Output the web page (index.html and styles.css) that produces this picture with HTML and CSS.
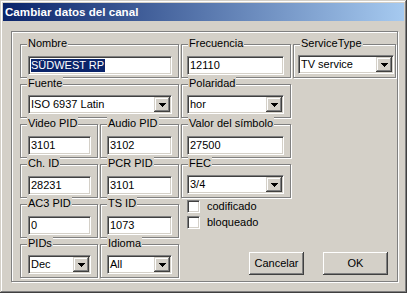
FILE: index.html
```html
<!DOCTYPE html>
<html>
<head>
<meta charset="utf-8">
<link rel="stylesheet" href="styles.css">
</head>
<body>
<div class="window">
  <div class="titlebar">Cambiar datos del canal</div>
  <div class="panel">
    <div class="grid">
      <div class="group wide r1 pl8"><span class="legend">Nombre</span>
        <div class="edit"><span class="sel">SÜDWEST RP</span></div></div>
      <div class="group c3 r1 pl5"><span class="legend">Frecuencia</span>
        <div class="edit">12110</div></div>
      <div class="group c4 r1 pl4"><span class="legend">ServiceType</span>
        <div class="combo"><span class="val">TV service</span><span class="drop"><svg width="7" height="4"><path d="M0 0h7v1H0zM1 1h5v1H1zM2 2h3v1H2zM3 3h1v1H3z"/></svg></span></div></div>

      <div class="group wide r2 pl8"><span class="legend">Fuente</span>
        <div class="combo"><span class="val">ISO 6937 Latin</span><span class="drop"><svg width="7" height="4"><path d="M0 0h7v1H0zM1 1h5v1H1zM2 2h3v1H2zM3 3h1v1H3z"/></svg></span></div></div>
      <div class="group c3 r2 pl5"><span class="legend">Polaridad</span>
        <div class="combo"><span class="val">hor</span><span class="drop"><svg width="7" height="4"><path d="M0 0h7v1H0zM1 1h5v1H1zM2 2h3v1H2zM3 3h1v1H3z"/></svg></span></div></div>

      <div class="group c1 r3 pl8"><span class="legend">Video PID</span>
        <div class="edit">3101</div></div>
      <div class="group c2 r3 pl6"><span class="legend">Audio PID</span>
        <div class="edit">3102</div></div>
      <div class="group c3 r3 pl5"><span class="legend">Valor del símbolo</span>
        <div class="edit">27500</div></div>

      <div class="group c1 r4 pl8"><span class="legend">Ch. ID</span>
        <div class="edit">28231</div></div>
      <div class="group c2 r4 pl6"><span class="legend">PCR PID</span>
        <div class="edit">3101</div></div>
      <div class="group c3 r4 pl5"><span class="legend">FEC</span>
        <div class="combo"><span class="val">3/4</span><span class="drop"><svg width="7" height="4"><path d="M0 0h7v1H0zM1 1h5v1H1zM2 2h3v1H2zM3 3h1v1H3z"/></svg></span></div></div>

      <div class="group c1 r5 pl8"><span class="legend">AC3 PID</span>
        <div class="edit">0</div></div>
      <div class="group c2 r5 pl6"><span class="legend">TS ID</span>
        <div class="edit">1073</div></div>
      <div class="checks">
        <label class="check"><span class="cbox"></span>codificado</label>
        <label class="check"><span class="cbox"></span>bloqueado</label>
      </div>

      <div class="group c1 r6 pl8"><span class="legend">PIDs</span>
        <div class="combo"><span class="val">Dec</span><span class="drop"><svg width="7" height="4"><path d="M0 0h7v1H0zM1 1h5v1H1zM2 2h3v1H2zM3 3h1v1H3z"/></svg></span></div></div>
      <div class="group c2 r6 pl6"><span class="legend">Idioma</span>
        <div class="combo"><span class="val">All</span><span class="drop"><svg width="7" height="4"><path d="M0 0h7v1H0zM1 1h5v1H1zM2 2h3v1H2zM3 3h1v1H3z"/></svg></span></div></div>
      <div class="buttons">
        <div class="btn btn-cancel">Cancelar</div>
        <div class="btn btn-ok">OK</div>
      </div>
    </div>
  </div>
</div>
</body>
</html>
```

FILE: styles.css
```css
html, body {
  margin: 0;
  padding: 0;
  background: #d4d0c8;
}
body {
  font-family: "Liberation Sans", Arial, sans-serif;
  font-size: 11px;
  color: #000;
}
.window {
  width: 407px;
  height: 293px;
  box-sizing: border-box;
  padding: 3px;
  background: #d4d0c8;
  box-shadow: inset -1px -1px #404040, inset 1px 1px #d4d0c8, inset -2px -2px #808080, inset 2px 2px #ffffff;
}
.titlebar {
  height: 18px;
  line-height: 18px;
  padding-left: 2px;
  background: linear-gradient(to right, #0a246a, #a6caf0);
  color: #fff;
  font-weight: bold;
  font-size: 11.6px;
  white-space: nowrap;
}
.panel {
  margin: 10px 0 0 8px;
  width: 387px;
  height: 251px;
  box-sizing: border-box;
  border: 1px solid #808080;
  box-shadow: inset 1px 1px #fff, 1px 1px #fff;
  padding: 12px 0 0 8px;
}
.grid {
  display: grid;
  grid-template-columns: 78px 79px 110px 103px;
  grid-template-rows: repeat(6, 34px);
  column-gap: 2px;
  row-gap: 6px;
}
.r1 { grid-row: 1; }
.r2 { grid-row: 2; }
.r3 { grid-row: 3; }
.r4 { grid-row: 4; }
.r5 { grid-row: 5; }
.r6 { grid-row: 6; }
.c1 { grid-column: 1; }
.c2 { grid-column: 2; }
.c3 { grid-column: 3; }
.c4 { grid-column: 4; }
.wide { grid-column: 1 / 3; }
.group {
  position: relative;
  box-sizing: border-box;
  border: 1px solid #808080;
  box-shadow: inset 1px 1px #fff, 1px 1px #fff;
  padding: 10px 6px 0 7px;
}
.pl8 { padding-left: 7px; }
.pl6 { padding-left: 6px; }
.pl5 { padding-left: 5px; }
.pl4 { padding-left: 4px; padding-right: 1px; }
.legend {
  position: absolute;
  top: -8px;
  left: 6px;
  padding: 0 1px 0 1px;
  background: #d4d0c8;
  line-height: 13px;
  white-space: nowrap;
}
.edit, .combo {
  height: 19px;
  box-sizing: border-box;
  background: #fff;
  border: 1px solid;
  border-color: #808080 #fff #fff #808080;
  box-shadow: inset 1px 1px #404040, inset -1px -1px #d4d0c8;
  line-height: 16px;
  padding-left: 2px;
  white-space: nowrap;
  overflow: hidden;
}
.edit { margin-top: 1px; }
.sel {
  display: inline-block;
  background: #0a246a;
  color: #fff;
  line-height: 13px;
  margin-top: 1px;
  padding-right: 1px;
}
.combo {
  display: flex;
  justify-content: space-between;
  padding: 1px 1px 1px 2px;
  line-height: 15px;
}
.drop {
  width: 16px;
  height: 15px;
  box-sizing: border-box;
  background: #d4d0c8;
  box-shadow: inset -1px -1px #404040, inset 1px 1px #d4d0c8, inset -2px -2px #808080, inset 2px 2px #fff;
  display: flex;
  align-items: center;
  justify-content: center;
  padding-top: 1px;
}
.drop svg { display: block; fill: #000; }
.checks {
  grid-column: 3;
  grid-row: 5;
  margin-top: -4px;
  padding-left: 6px;
  display: flex;
  flex-direction: column;
  gap: 3px;
}
.check {
  display: flex;
  align-items: center;
  height: 13px;
  line-height: 13px;
}
.cbox {
  width: 13px;
  height: 13px;
  box-sizing: border-box;
  background: #fff;
  border: 1px solid;
  border-color: #808080 #fff #fff #808080;
  box-shadow: inset 1px 1px #404040, inset -1px -1px #d4d0c8;
  margin-right: 7px;
}
.buttons {
  grid-column: 3 / 5;
  grid-row: 6;
  display: flex;
  justify-content: flex-end;
  gap: 19px;
  padding: 8px 8px 0 0;
}
.btn {
  height: 23px;
  box-sizing: border-box;
  background: #d4d0c8;
  box-shadow: inset -1px -1px #404040, inset 1px 1px #fff, inset -2px -2px #808080;
  text-align: center;
  line-height: 23px;
}
.btn-cancel { width: 55px; }
.btn-ok { width: 65px; }
```
